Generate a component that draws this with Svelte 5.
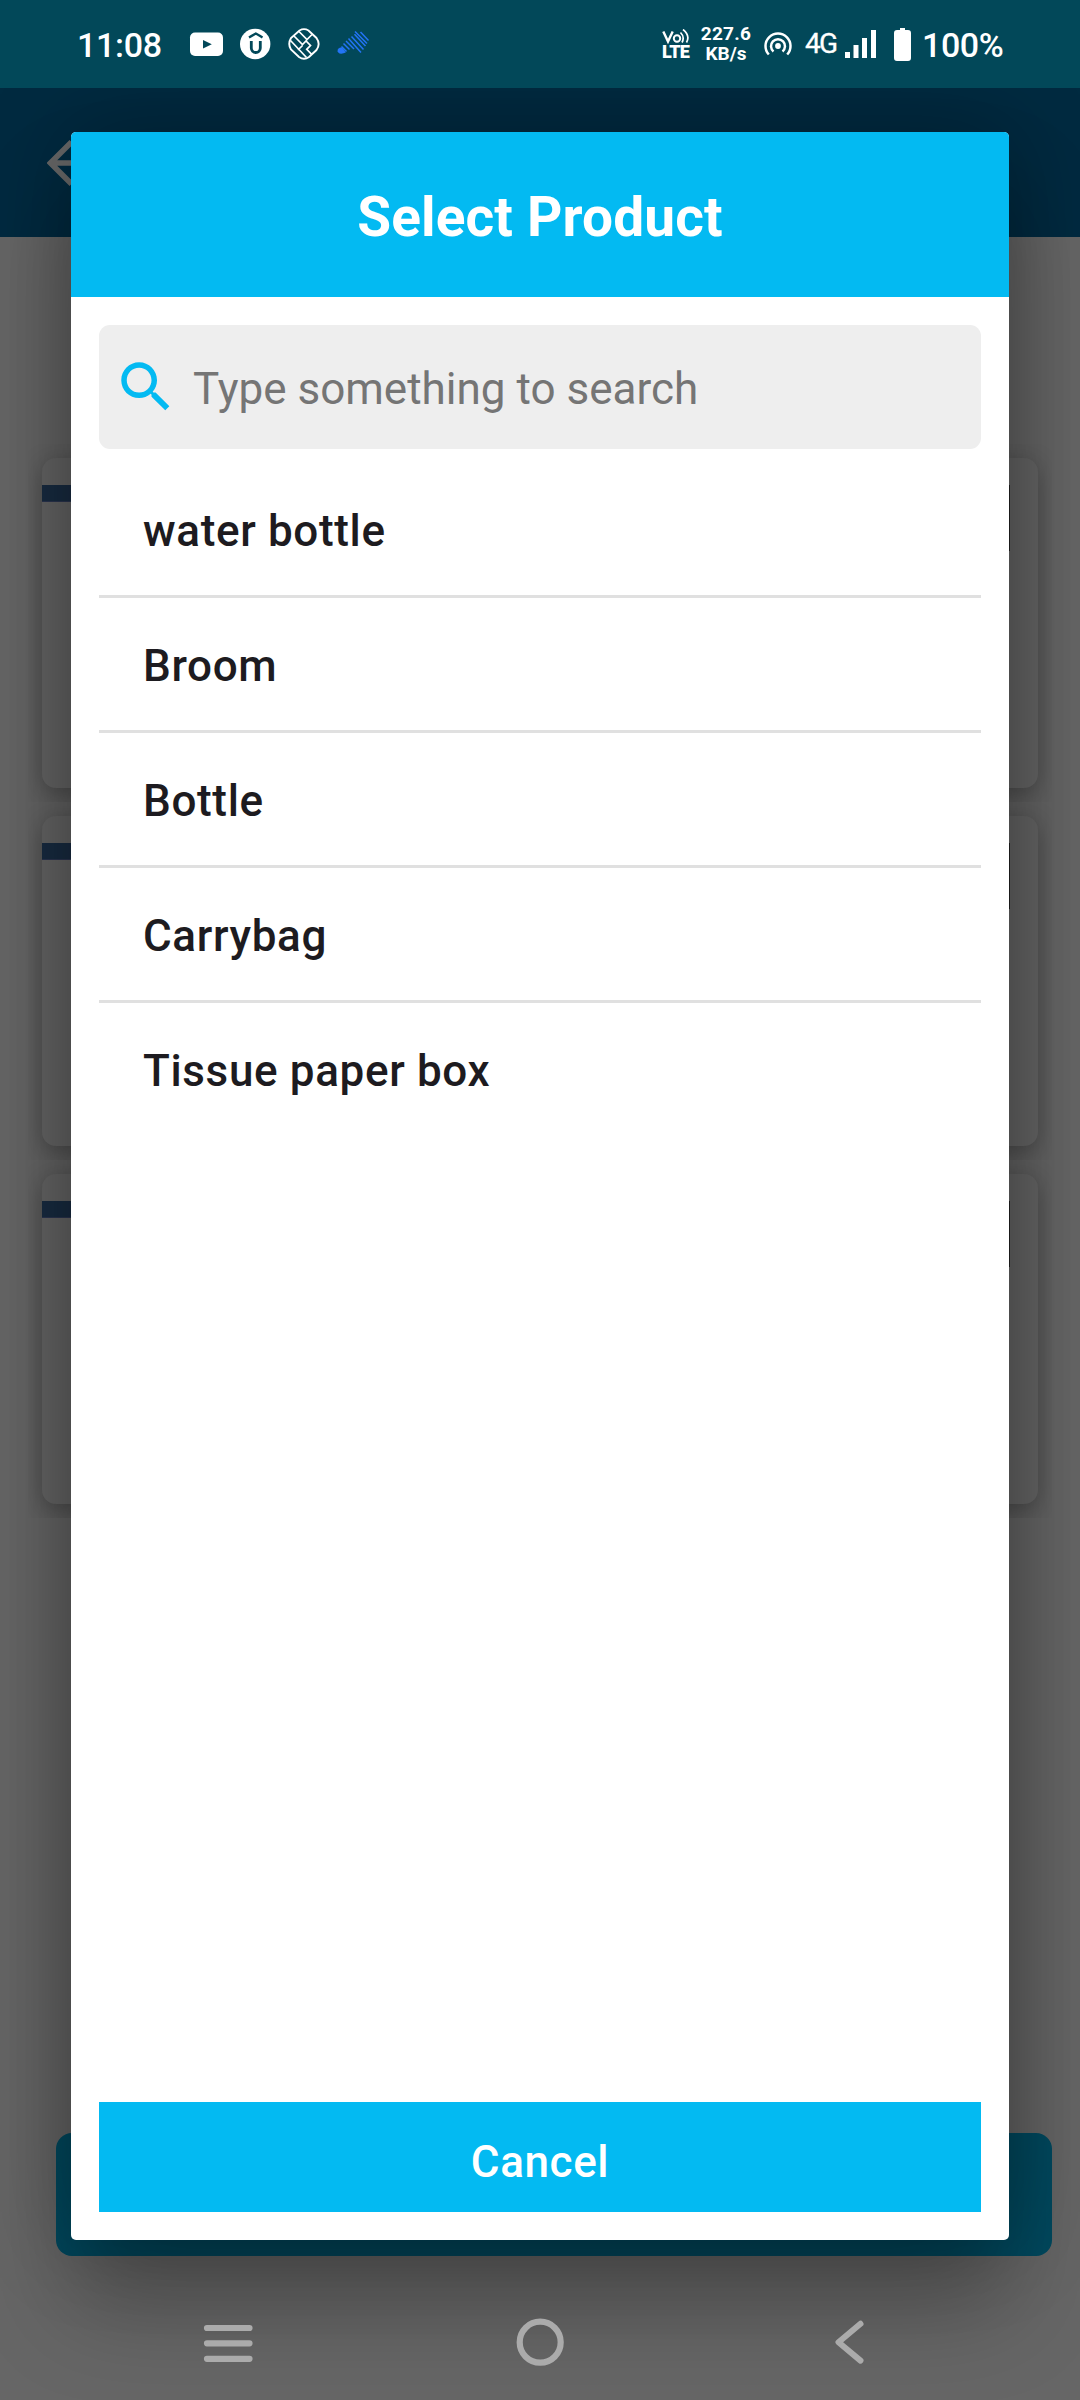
<script>
  const products = ['water bottle', 'Broom', 'Bottle', 'Carrybag', 'Tissue paper box'];
  const cards = [1, 2, 3];
</script>

<div class="screen">
  <header class="status">
    <span class="clock">11:08</span>
    <svg class="notif" width="184" height="34" viewBox="0 0 184 34">
      <rect x="1" y="5.500" width="33" height="23.500" rx="5" fill="#fff" />
      <path d="M14 13l8.800 4.300-8.800 4.300z" fill="#024859" />
      <circle cx="66.200" cy="17" r="15.200" fill="#fff" />
      <g fill="none" stroke="#024859">
        <path d="M60 10.500Q63 8.500 66.800 6.500Q70.500 8.500 73.500 10.500" stroke-width="2.200" />
        <path d="M62.300 14v7a4.500 4.500 0 0 0 9 0v-7" stroke-width="2.800" />
      </g>
      <g fill="none" stroke="#fff" stroke-width="1.900">
        <path d="M110.500 3.500Q115 0.800 119.500 3.500L127.500 11Q131.800 17 127.500 23L120 30Q115 33.500 110 30L102 22.500Q98.500 17 102 11Z" />
        <path d="M101.500 13.500l16 17M105 9l8.500 8.500 3.500-3.500 4.500 4.500-3.800 3.800 5 5M110 4.500l8 8 5-5M109 23l4.500-4.500" stroke-width="1.700" />
      </g>
      <g stroke="#2374f5" stroke-width="1.500" fill="none">
        <path d="M149.500 21.500q3-2 4.800 0.500l2.500 3.500q-3 1.500-6.300 1a3 3 0 0 1-1-5z" fill="#2374f5" stroke="none" />
        <path d="M152.500 19.500l5 5M154.500 16.500l6 6M157 14l8 8M159.500 11.500l12.500 14M162.500 9.500l12 13M161.500 4.800M165.500 7.300l11 11.800M163 4.800M166 4.500l12 12M171.500 5l8 8.500" />
      </g>
    </svg>
    <div class="right">
      <div class="volte">
        <svg width="28" height="15" viewBox="0 0 28 15" fill="none" stroke="#fff" stroke-width="2.400">
          <path d="M1.300 2.500l4.700 10L10.700 2.500" />
          <circle cx="15" cy="9.500" r="3.200" stroke-width="2" />
          <path d="M18.500 3.500q4.500 4.500 1.500 10M21 0.500q7.500 6 3.500 13" stroke-width="1.700" />
        </svg>
        <span>LTE</span>
      </div>
      <div class="rate"><span>227.6</span><span>KB/s</span></div>
      <svg class="hotspot" width="28" height="24" viewBox="0 0 28 24" fill="none" stroke="#fff" stroke-width="2.500">
        <circle cx="14" cy="14" r="2.900" fill="#fff" stroke="none" />
        <path d="M9.500 19.500a7 7 0 1 1 9 0" />
        <path d="M4.800 22.500a12.500 12.500 0 1 1 18.400 0" />
      </svg>
      <span class="net">4G</span>
      <svg class="signal" width="31" height="28" viewBox="0 0 31 28" fill="#fff">
        <path d="M0 22h5v6H0zM8.500 15h5v13h-5zM17 8h5v20h-5zM26 0h5v28h-5z" />
      </svg>
      <svg class="battery" width="17" height="33" viewBox="0 0 17 33" fill="#fff">
        <path d="M6 0h5v2h3a3 3 0 0 1 3 3v25a3 3 0 0 1-3 3H3a3 3 0 0 1-3-3V5a3 3 0 0 1 3-3h3z" />
      </svg>
      <span class="pct">100%</span>
    </div>
  </header>

  <div class="appbar">
    <svg width="44" height="46" viewBox="0 0 44 46" fill="none" stroke="#686868" stroke-width="5.500">
      <path d="M24.500 2L3.500 23l21 21M4 23h40" />
    </svg>
  </div>

  <main class="page">
    {#each cards as card (card)}
      <section class="cell">
        <div class="card"><i class="strip"></i><i class="edge"></i></div>
      </section>
    {/each}
  </main>
  <div class="submit"></div>

  <nav class="nav">
    <svg width="52" height="52" viewBox="0 0 52 52" stroke="#ababab" stroke-width="6.200" stroke-linecap="round">
      <path d="M5 11h42.500M5 26.300h42.500M5 41.800h42.500" />
    </svg>
    <svg width="52" height="52" viewBox="0 0 52 52" fill="none" stroke="#ababab" stroke-width="6.200">
      <circle cx="26.200" cy="25.200" r="20.500" />
    </svg>
    <svg width="52" height="52" viewBox="0 0 52 52" fill="none" stroke="#ababab" stroke-width="6" stroke-linecap="round" stroke-linejoin="round">
      <path d="M34.500 6.800L12.500 25.200 34.500 43.600" />
    </svg>
  </nav>

  <div class="dialog" role="dialog" aria-label="Select Product">
    <h1>Select Product</h1>
    <div class="body">
      <div class="search">
        <svg width="66" height="66" viewBox="0 0 24 24" fill="#03baf2">
          <path d="M15.500 14h-.79l-.28-.27C15.410 12.590 16 11.110 16 9.500 16 5.910 13.090 3 9.500 3S3 5.910 3 9.500 5.910 16 9.500 16c1.610 0 3.090-.59 4.230-1.570l.27.28v.79l5 4.990L20.490 19l-4.990-5zm-6 0C7.010 14 5 11.990 5 9.500S7.010 5 9.500 5 14 7.010 14 9.500 11.990 14 9.500 14z" />
        </svg>
        <span>Type something to search</span>
      </div>
      <ul>
        {#each products as product}
          <li>{product}</li>
        {/each}
      </ul>
      <button>Cancel</button>
    </div>
  </div>
</div>

<style>
  :global(body) {
    margin: 0;
  }
  .screen {
    position: relative;
    display: flex;
    flex-direction: column;
    width: 1080px;
    height: 2400px;
    overflow: hidden;
    background: #666;
    font-family: Roboto, sans-serif;
    color: #fff;
  }
  svg {
    display: block;
    flex: none;
  }
  .status {
    display: flex;
    flex: none;
    align-items: center;
    box-sizing: border-box;
    height: 88px;
    padding: 0 78px 0 77px;
    background: #024859;
    position: relative;
    z-index: 1;
  }
  .clock {
    width: 112px;
    padding-top: 2px;
    font-size: 34px;
    font-weight: 500;
    line-height: 40px;
    letter-spacing: -0.3px;
    white-space: nowrap;
  }
  .right {
    display: flex;
    align-items: center;
    margin-left: auto;
  }
  .volte {
    display: flex;
    flex-direction: column;
    width: 28px;
  }
  .volte span {
    font-size: 18px;
    font-weight: 900;
    line-height: 15px;
    letter-spacing: -0.8px;
  }
  .rate {
    display: flex;
    flex-direction: column;
    align-items: center;
    width: 52px;
    margin-left: 10px;
    font-size: 19px;
    font-weight: 700;
    line-height: 20px;
  }
  .rate span:first-child {
    letter-spacing: 0.3px;
  }
  .hotspot {
    margin-left: 12px;
  }
  .net {
    width: 30px;
    margin-left: 13px;
    font-size: 28px;
    line-height: 32px;
    letter-spacing: -1.8px;
    -webkit-text-stroke: 0.3px #fff;
  }
  .signal {
    margin-left: 10px;
  }
  .battery {
    margin-left: 18px;
  }
  .pct {
    width: 80px;
    margin-left: 11px;
    padding-top: 2px;
    font-size: 34px;
    font-weight: 500;
    line-height: 40px;
    letter-spacing: -0.4px;
  }
  .appbar {
    display: flex;
    flex: none;
    align-items: center;
    box-sizing: border-box;
    height: 149px;
    padding-left: 47px;
    background: #002a40;
  }
  .page {
    display: flex;
    flex: none;
    flex-direction: column;
    box-sizing: border-box;
    height: 1689px;
    padding: 207px 28px 0;
  }
  .cell {
    box-sizing: border-box;
    height: 358px;
    padding: 14px;
    overflow: hidden;
  }
  .card {
    display: flex;
    justify-content: space-between;
    box-sizing: border-box;
    height: 330px;
    padding-top: 27px;
    border-radius: 14px;
    background: #666;
    box-shadow: 0 6px 24px rgba(0, 0, 0, 0.28);
  }
  .strip {
    width: 400px;
    height: 16px;
    background: #182c42;
    border-bottom: 1px solid #2b3550;
  }
  .edge {
    width: 1px;
    height: 66px;
    margin-right: 28px;
    background: #222;
  }
  .submit {
    flex: none;
    height: 123px;
    margin: 207px 28px 0 56px;
    border-radius: 16px;
    background: #004a60;
  }
  .nav {
    position: relative;
    z-index: 2;
    display: flex;
    justify-content: space-between;
    box-sizing: border-box;
    height: 144px;
    padding: 61px 202px 0;
  }
  .dialog {
    position: absolute;
    left: 71px;
    top: 132px;
    display: flex;
    flex-direction: column;
    width: 938px;
    height: 2108px;
    overflow: hidden;
    border-radius: 5px;
    background: #fff;
    box-shadow:
      0 0 90px rgba(0, 0, 0, 0.28),
      0 66px 96px rgba(0, 0, 0, 0.26);
  }
  h1 {
    flex: none;
    height: 165px;
    margin: 0;
    background: #03baf2;
    font-size: 55px;
    font-weight: 700;
    line-height: 170px;
    letter-spacing: 0.15px;
    text-align: center;
  }
  .body {
    display: flex;
    flex: 1;
    flex-direction: column;
    padding: 28px;
  }
  .search {
    display: flex;
    align-items: center;
    height: 124px;
    padding-left: 14px;
    border-radius: 11px;
    background: #eee;
    color: #757575;
    font-size: 44px;
  }
  .search span {
    margin-left: 14px;
    padding-top: 4px;
    line-height: 52px;
    white-space: nowrap;
  }
  ul {
    flex: 1;
    margin: 0;
    padding: 14px 0 0;
    list-style: none;
  }
  li {
    box-sizing: border-box;
    height: 135px;
    padding-left: 44px;
    border-bottom: 3px solid #e0e0e0;
    color: #1d1b20;
    font-size: 44px;
    font-weight: 500;
    line-height: 136px;
    letter-spacing: 0.65px;
  }
  li:last-child {
    border-bottom: 0;
  }
  button {
    height: 110px;
    padding: 9px 0 0;
    border: 0;
    background: #03baf2;
    color: #fff;
    font: 500 44px Roboto, sans-serif;
    letter-spacing: 0.6px;
  }
</style>
